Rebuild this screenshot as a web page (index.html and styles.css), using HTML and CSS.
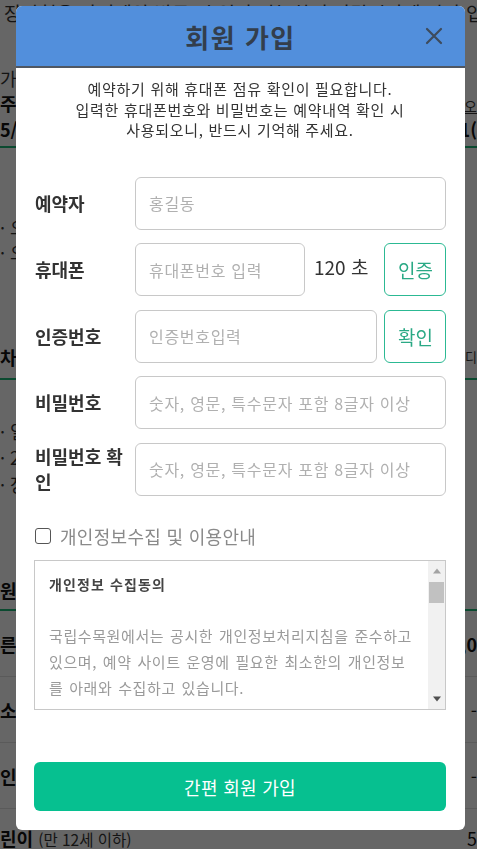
FILE: index.html
```html
<!DOCTYPE html>
<html lang="ko">
<head>
<meta charset="utf-8">
<title>회원 가입</title>
<link rel="stylesheet" href="styles.css">
</head>
<body>
<div class="page">
  <div class="bg-row bg-top"><span>장마철은 사전예약 방문 시 입장 가능하며 관람시간에 따라 입장이 제한될 수</span></div>
  <div class="bg-row r-ga"><span>가</span></div>
  <div class="bg-row r-ju"><b>주</b><span class="u">오</span></div>
  <div class="bg-row r-5"><b>5/</b><b>1(</b></div>
  <div class="bg-line g1"></div>
  <div class="bg-row r-o1"><span>· 오</span></div>
  <div class="bg-row r-o2"><span>· 오</span></div>
  <div class="bg-row r-cha"><b>차</b><span class="sm">디</span></div>
  <div class="bg-line g2"></div>
  <div class="bg-row r-il"><span>· 일</span></div>
  <div class="bg-row r-2"><span>· 2</span></div>
  <div class="bg-row r-jang"><span>· 장</span></div>
  <div class="bg-row r-won"><b>원증</b></div>
  <div class="bg-line g3"></div>
  <div class="bg-row r-t"><b>른</b><b>1,0</b></div>
  <div class="bg-row r-t"><b>소</b><span>-</span></div>
  <div class="bg-row r-t"><b>인</b><span>-</span></div>
  <div class="bg-row r-last"><span><b>린이</b> <small>(만 12세 이하)</small></span><span>5</span></div>
</div>

<div class="modal" role="dialog">
  <div class="modal-head">
    <h2 class="modal-title">회원 가입</h2>
    <button class="close" aria-label="닫기">
      <svg width="18" height="18" viewBox="0 0 18 18"><path d="M2 2 L16 16 M16 2 L2 16" stroke="#3e4b5c" stroke-width="2.2" stroke-linecap="round"/></svg>
    </button>
  </div>
  <div class="modal-body">
    <p class="intro">예약하기 위해 휴대폰 점유 확인이 필요합니다.<br>입력한 휴대폰번호와 비밀번호는 예약내역 확인 시<br>사용되오니, 반드시 기억해 주세요.</p>

    <div class="form">
      <div class="row">
        <label class="lbl">예약자</label>
        <input class="inp" type="text" placeholder="홍길동">
      </div>
      <div class="row">
        <label class="lbl">휴대폰</label>
        <input class="inp inp-phone" type="text" placeholder="휴대폰번호 입력">
        <span class="timer">120 초</span>
        <button class="btn-line">인증</button>
      </div>
      <div class="row">
        <label class="lbl">인증번호</label>
        <input class="inp inp-code" type="text" placeholder="인증번호입력">
        <button class="btn-line">확인</button>
      </div>
      <div class="row">
        <label class="lbl">비밀번호</label>
        <input class="inp" type="password" placeholder="숫자, 영문, 특수문자 포함 8글자 이상">
      </div>
      <div class="row">
        <label class="lbl">비밀번호 확인</label>
        <input class="inp" type="password" placeholder="숫자, 영문, 특수문자 포함 8글자 이상">
      </div>
    </div>

    <label class="agree"><input type="checkbox" class="chk"><span>개인정보수집 및 이용안내</span></label>

    <div class="terms">
      <div class="terms-text">
        <b class="terms-title">개인정보 수집동의</b><br><br>
        국립수목원에서는 공시한 개인정보처리지침을 준수하고<br>있으며, 예약 사이트 운영에 필요한 최소한의 개인정보<br>를 아래와 수집하고 있습니다.<br><br>
        1. 수집하는 개인정보 항목<br>
        - 필수항목 : 예약자 성명, 휴대폰번호, 비밀번호
      </div>
      <div class="sbar" aria-hidden="true">
        <div class="sb-btn"><svg width="10" height="6" viewBox="0 0 10 6"><path d="M1 5.5 L9 5.5 L5 0.5 Z" fill="#a3a3a3"/></svg></div>
        <div class="sb-track"><div class="sb-thumb"></div></div>
        <div class="sb-btn"><svg width="10" height="6" viewBox="0 0 10 6"><path d="M1 0.5 L9 0.5 L5 5.5 Z" fill="#505050"/></svg></div>
      </div>
    </div>

    <button class="submit">간편 회원 가입</button>
  </div>
</div>
</body>
</html>
```

FILE: styles.css
```css
* { box-sizing: border-box; }

html, body {
  margin: 0;
  padding: 0;
}

body {
  font-family: "Noto Sans CJK KR", "Noto Sans", sans-serif;
  background: #666666;
  color: #070707;
  width: 477px;
  height: 849px;
  overflow: hidden;
}

/* ---------- background page (already dimmed by the modal backdrop) ---------- */
.page {
  font-size: 18px;
  line-height: 24px;
  color: #070707;
}
.bg-row {
  display: flex;
  justify-content: space-between;
  align-items: center;
  height: 25px;
  white-space: nowrap;
  overflow: hidden;
}
.bg-row b { font-weight: 700; }
.bg-top { padding-left: 4px; font-size: 19px; color: #141414; }
.r-ga { margin-top: 40px; color: #141414; }
.r-ju .u { font-size: 14px; text-decoration: underline; margin-top: 6px; color: #141414; }
.r-5 { height: 28px; }
.bg-line { height: 2px; background: #0b4a30; }
.g1 { margin-top: 3px; }
.r-o1 { margin-top: 66px; color: #141414; }
.r-o2 { color: #141414; }
.r-cha { margin-top: 80px; }
.r-cha .sm { font-size: 13px; color: #141414; }
.g2 { margin-top: 9px; }
.r-il { margin-top: 38px; color: #141414; }
.r-2, .r-jang { color: #141414; height: 27px; }
.r-won { margin-top: 80px; }
.g3 { margin-top: 7px; }
.r-t {
  height: 66px;
  border-bottom: 1px solid #5a5a5a;
}
.r-last { height: 58px; }
.r-last small { font-size: 15.5px; font-weight: 400; color: #141414; }

/* ---------- modal ---------- */
.modal {
  position: fixed;
  top: 6px;
  left: 16px;
  width: 449px;
  height: 824px;
  background: #fff;
  border-radius: 6px;
  overflow: hidden;
  display: flex;
  flex-direction: column;
}

.modal-head {
  height: 62px;
  flex: none;
  background: #528fdc;
  border-bottom: 2px solid #4f5763;
  display: flex;
  align-items: center;
  justify-content: center;
  position: relative;
}
.modal-title {
  margin: 0;
  font-size: 26px;
  font-weight: 700;
  color: #333e4c;
  letter-spacing: 1.5px;
}
.close {
  position: absolute;
  right: 22px;
  top: 21px;
  width: 18px;
  height: 18px;
  padding: 0;
  border: 0;
  background: none;
  display: flex;
}

.modal-body {
  padding: 11px 19px 19px 18px;
  display: flex;
  flex-direction: column;
  flex: 1;
}

.intro {
  margin: 0;
  text-align: center;
  font-size: 15px;
  letter-spacing: 0.7px;
  line-height: 20.5px;
  color: #333;
}

.form {
  margin-top: 36px;
  display: flex;
  flex-direction: column;
  gap: 13.5px;
}
.row {
  display: flex;
  align-items: center;
  height: 53px;
}
.lbl {
  width: 101px;
  flex: none;
  padding-left: 1px;
  font-size: 18px;
  font-weight: 700;
  line-height: 25px;
  color: #333;
}
.inp {
  flex: 1;
  min-width: 0;
  height: 53px;
  border: 1px solid #c8c8c8;
  border-radius: 6px;
  padding: 0 13px;
  font-family: inherit;
  font-size: 16px;
  letter-spacing: 0.7px;
  color: #333;
  background: #fff;
  outline: none;
}
.inp::placeholder { color: #b0b0b0; }
.inp-phone { flex: none; width: 170px; }
.inp-code { flex: none; width: 242px; }

.timer {
  flex: 1;
  padding-left: 9px;
  font-size: 19px;
  color: #333;
  margin-top: -6px;
}
.btn-line {
  flex: none;
  width: 62px;
  height: 53px;
  margin-left: auto;
  border: 1px solid #2cb993;
  border-radius: 6px;
  background: #fff;
  color: #2aa985;
  font-family: inherit;
  font-size: 19px;
  padding: 0 0 0 1px;
}
.inp-code + .btn-line { margin-left: 7px; }

.agree {
  margin-top: 28px;
  height: 24px;
  display: flex;
  align-items: center;
  gap: 9px;
  font-size: 18px;
  letter-spacing: 0.3px;
  line-height: 24px;
  color: #8a8a8a;
  padding-left: 1px;
}
.chk {
  appearance: none;
  -webkit-appearance: none;
  margin: 0;
  width: 16px;
  height: 16px;
  flex: none;
  border: 1.5px solid #555;
  border-radius: 3px;
  background: #fff;
}

.terms {
  margin-top: 12px;
  height: 150px;
  border: 1px solid #c8c8c8;
  display: flex;
}
.terms-text {
  flex: 1;
  min-width: 0;
  overflow: hidden;
  padding: 10px 0 0 14px;
  font-size: 15px;
  letter-spacing: 0.6px;
  word-spacing: 1px;
  line-height: 26px;
  color: #9a9a9a;
  white-space: nowrap;
}
.terms-title { color: #444; font-weight: 700; font-size: 14px; letter-spacing: 1.1px; word-spacing: 0; }

.sbar {
  width: 17px;
  flex: none;
  background: #f1f1f1;
  display: flex;
  flex-direction: column;
}
.sb-btn {
  height: 20px;
  display: flex;
  align-items: center;
  justify-content: center;
}
.sb-track { flex: 1; }
.sb-thumb {
  height: 21px;
  margin: 1px 1px 0 1px;
  background: #c1c1c1;
}

.submit {
  margin-top: auto;
  height: 49px;
  border: 0;
  border-radius: 6px;
  background: #06c090;
  color: #fff;
  font-family: inherit;
  font-size: 18px;
  letter-spacing: 0.3px;
  width: 100%;
}
```
